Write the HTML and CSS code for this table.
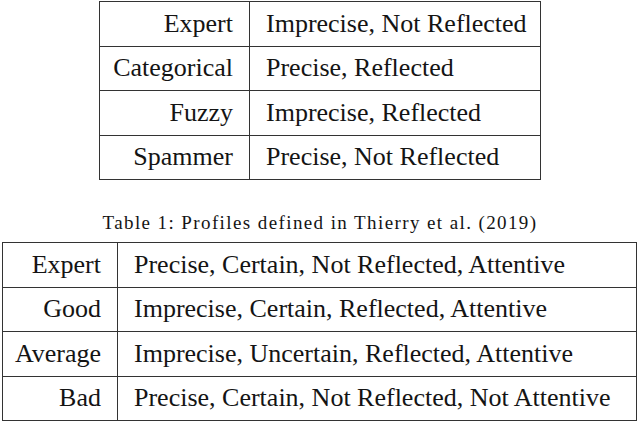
FILE: index.html
```html
<!DOCTYPE html>
<html>
<head>
<meta charset="utf-8">
<link rel="stylesheet" href="styles.css">
</head>
<body>
<div class="page">
  <div class="grid g1">
    <div class="cell k">Expert</div><div class="cell v">Imprecise, Not Reflected</div>
    <div class="cell k">Categorical</div><div class="cell v">Precise, Reflected</div>
    <div class="cell k">Fuzzy</div><div class="cell v">Imprecise, Reflected</div>
    <div class="cell k">Spammer</div><div class="cell v">Precise, Not Reflected</div>
  </div>
  <div class="caption">Table 1: Profiles defined in Thierry et al. (2019)</div>
  <div class="grid g2">
    <div class="cell k">Expert</div><div class="cell v">Precise, Certain, Not Reflected, Attentive</div>
    <div class="cell k">Good</div><div class="cell v">Imprecise, Certain, Reflected, Attentive</div>
    <div class="cell k">Average</div><div class="cell v">Imprecise, Uncertain, Reflected, Attentive</div>
    <div class="cell k">Bad</div><div class="cell v">Precise, Certain, Not Reflected, Not Attentive</div>
  </div>
</div>
</body>
</html>
```

FILE: styles.css
```css
html, body {
  margin: 0;
  padding: 0;
  background: #ffffff;
}
body {
  font-family: "Liberation Serif", serif;
  color: #141414;
}
.page {
  display: flex;
  flex-direction: column;
  align-items: flex-start;
  width: 640px;
}
.grid {
  display: grid;
  grid-auto-rows: 44.5px;
  border-top: 1px solid #333333;
  border-left: 1px solid #333333;
}
.g1 {
  margin: 1px 0 0 99px;
  grid-template-columns: 150px 291px;
}
.g2 {
  margin: 0 0 0 2px;
  grid-template-columns: 115px 519px;
}
.cell {
  display: flex;
  align-items: center;
  border-right: 1px solid #333333;
  border-bottom: 1px solid #333333;
  padding: 0 16px;
  font-size: 26px;
  white-space: nowrap;
  box-sizing: border-box;
}
.k {
  justify-content: flex-end;
}
.caption {
  width: 640px;
  margin-top: 33px;
  margin-bottom: 10px;
  text-align: center;
  font-size: 19px;
  line-height: 19px;
  letter-spacing: 1.4px;
}
```
